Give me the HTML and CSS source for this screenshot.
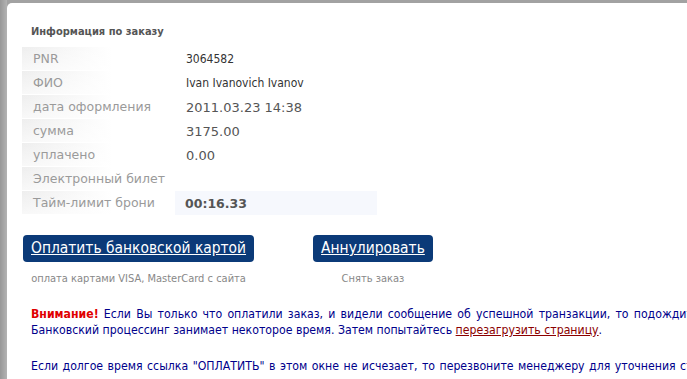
FILE: index.html
```html
<!DOCTYPE html>
<html lang="ru">
<head>
<meta charset="utf-8">
<link rel="stylesheet" href="styles.css">
</head>
<body>
<div class="page">
  <h1 class="title">Информация по заказу</h1>
  <div class="info">
    <div class="row"><div class="label">PNR</div><div class="value strong">3064582</div></div>
    <div class="row"><div class="label">ФИО</div><div class="value strong">Ivan Ivanovich Ivanov</div></div>
    <div class="row"><div class="label">дата оформления</div><div class="value">2011.03.23 14:38</div></div>
    <div class="row"><div class="label">сумма</div><div class="value">3175.00</div></div>
    <div class="row"><div class="label">уплачено</div><div class="value">0.00</div></div>
    <div class="row"><div class="label">Электронный билет</div><div class="value"></div></div>
    <div class="row"><div class="label">Тайм-лимит брони</div><div class="value timer">00:16.33</div></div>
  </div>
  <div class="actions">
    <div class="action">
      <a class="btn" href="#">Оплатить банковской картой</a>
      <div class="caption">оплата картами VISA, MasterCard с сайта</div>
    </div>
    <div class="action">
      <a class="btn" href="#">Аннулировать</a>
      <div class="caption">Снять заказ</div>
    </div>
  </div>
  <div class="notice">
    <p class="line line1"><b class="warn">Внимание!</b> Если Вы только что оплатили заказ, и видели сообщение об успешной транзакции, то подождите несколько минут.</p>
    <p class="line line2">Банковский процессинг занимает некоторое время. Затем попытайтесь <a class="reload" href="#">перезагрузить страницу</a>.</p>
    <p class="line line3">Если долгое время ссылка "ОПЛАТИТЬ" в этом окне не исчезает, то перезвоните менеджеру для уточнения статуса заказа.</p>
  </div>
</div>
</body>
</html>
```

FILE: styles.css
```css
html, body {
  margin: 0;
  padding: 0;
}
body {
  width: 687px;
  height: 379px;
  overflow: hidden;
  background: linear-gradient(to right, #979797 0, #b3b3b3 7px, #a2a2a2 7px);
}
.page {
  margin: 3px 0 0 7px;
  width: 1000px;
  height: 376px;
  background: #fff;
  border-top-left-radius: 5px;
  padding: 22px 0 0 15px;
  box-sizing: border-box;
}
.title {
  margin: 0 0 9px 9px;
  font: bold 11px/13px "DejaVu Sans Condensed", "DejaVu Sans", sans-serif;
  color: #555;
}
.info {
  display: flex;
  flex-direction: column;
}
.row {
  display: flex;
  height: 24px;
  align-items: stretch;
}
.label {
  width: 153px;
  margin-bottom: 1px;
  padding-left: 11px;
  box-sizing: border-box;
  display: flex;
  align-items: center;
  font: 12.5px "DejaVu Sans", sans-serif;
  color: #9a9a9a;
  background:
    linear-gradient(to bottom, rgba(255,255,255,0), rgba(255,255,255,0.6)),
    linear-gradient(to right, #eeeeee 0, #f7f7f7 45px, #fff 90px);
}
.value {
  width: 202px;
  padding-left: 11px;
  box-sizing: border-box;
  display: flex;
  align-items: center;
  font: 13px "DejaVu Sans", sans-serif;
  color: #555;
}
.value.strong {
  font: 12px "DejaVu Sans Condensed", "DejaVu Sans", sans-serif;
  color: #333;
}
.value.timer {
  background: #f6f8fd;
  font-weight: bold;
  font-size: 12.5px;
  padding-left: 10px;
}
.actions {
  display: flex;
  gap: 59px;
  margin-top: 20px;
  margin-left: 1px;
}
.action {
  display: flex;
  flex-direction: column;
  align-items: center;
}
.btn {
  display: block;
  background: #0b3a78;
  color: #fff;
  border-radius: 4px;
  padding: 0 8px;
  height: 27px;
  font: 15.4px/27px "DejaVu Sans Condensed", "DejaVu Sans", sans-serif;
  text-decoration: underline;
}
.caption {
  margin-top: 10px;
  font: 11px/13px "DejaVu Sans Condensed", "DejaVu Sans", sans-serif;
  color: #888;
}
.notice {
  margin-top: 21px;
  margin-left: 9px;
  font: 12.2px/16px "DejaVu Sans Condensed", "DejaVu Sans", sans-serif;
  color: #00008b;
  white-space: nowrap;
}
.line {
  margin: 0;
}
.line1 {
  width: 778px;
  white-space: normal;
  text-align: justify;
  text-align-last: justify;
}
.line3 {
  margin-top: 20px;
  word-spacing: 1px;
}
.warn {
  color: #e00000;
}
.reload {
  color: #8b0000;
}
```
